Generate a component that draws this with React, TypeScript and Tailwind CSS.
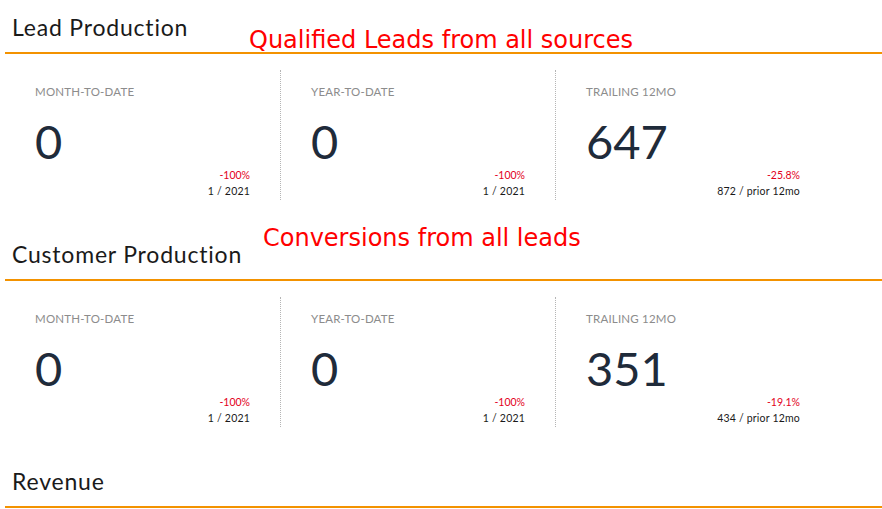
import React from 'react';

type StatProps = {
  label: string;
  value: string;
  delta: string;
  note: string;
  first?: boolean;
};

const Stat = ({ label, value, delta, note, first }: StatProps) => (
  <div
    className={`w-[275px] h-[130px] pl-[30px] pr-[30px] pt-[14px] ${
      first ? '' : 'border-l border-dotted border-[#b5b5b5]'
    }`}
  >
    <div className="text-[11.5px] leading-4 uppercase tracking-[0.2px] text-[#8c8c8c]">{label}</div>
    <div className="mt-[18px] text-[47px] leading-none text-[#1f2b3a]">{value}</div>
    <div className="mt-[2px] text-right text-[10.5px] leading-4 text-[#e3001b]">{delta}</div>
    <div className="text-right text-[10.5px] leading-4 tracking-[0.2px] text-[#1a1a1a]">{note}</div>
  </div>
);

type SectionProps = {
  title: string;
  stats?: StatProps[];
};

const Section = ({ title, stats }: SectionProps) => (
  <section className="ml-[5px] mb-[27px]">
    <div className="h-[54px] pt-[13px] pl-[7px] border-b-2 border-[#f39200]">
      <h2 className="text-[23px] leading-7 font-normal tracking-[0.8px] text-[#1a1a1a]">{title}</h2>
    </div>
    {stats && (
      <div className="mt-[16px] flex">
        {stats.map((s, i) => (
          <Stat key={s.label} {...s} first={i === 0} />
        ))}
      </div>
    )}
  </section>
);

export default function App() {
  return (
    <div
      className="relative w-[882px] h-[509px] overflow-hidden bg-white"
      style={{ fontFamily: 'Lato, "Noto Sans", sans-serif' }}
    >
      <Section
        title="Lead Production"
        stats={[
          { label: 'Month-to-date', value: '0', delta: '-100%', note: '1 / 2021' },
          { label: 'Year-to-date', value: '0', delta: '-100%', note: '1 / 2021' },
          { label: 'Trailing 12mo', value: '647', delta: '-25.8%', note: '872 / prior 12mo' },
        ]}
      />
      <Section
        title="Customer Production"
        stats={[
          { label: 'Month-to-date', value: '0', delta: '-100%', note: '1 / 2021' },
          { label: 'Year-to-date', value: '0', delta: '-100%', note: '1 / 2021' },
          { label: 'Trailing 12mo', value: '351', delta: '-19.1%', note: '434 / prior 12mo' },
        ]}
      />
      <Section title="Revenue" />

      {/* annotations */}
      <div
        className="absolute left-[249px] top-[28px] text-[24px] leading-none text-[#ff0000] whitespace-nowrap"
        style={{ fontFamily: '"DejaVu Sans", sans-serif' }}
      >
        Qualified Leads from all sources
      </div>
      <div
        className="absolute left-[263px] top-[226px] text-[24px] leading-none text-[#ff0000] whitespace-nowrap"
        style={{ fontFamily: '"DejaVu Sans", sans-serif' }}
      >
        Conversions from all leads
      </div>
    </div>
  );
}
